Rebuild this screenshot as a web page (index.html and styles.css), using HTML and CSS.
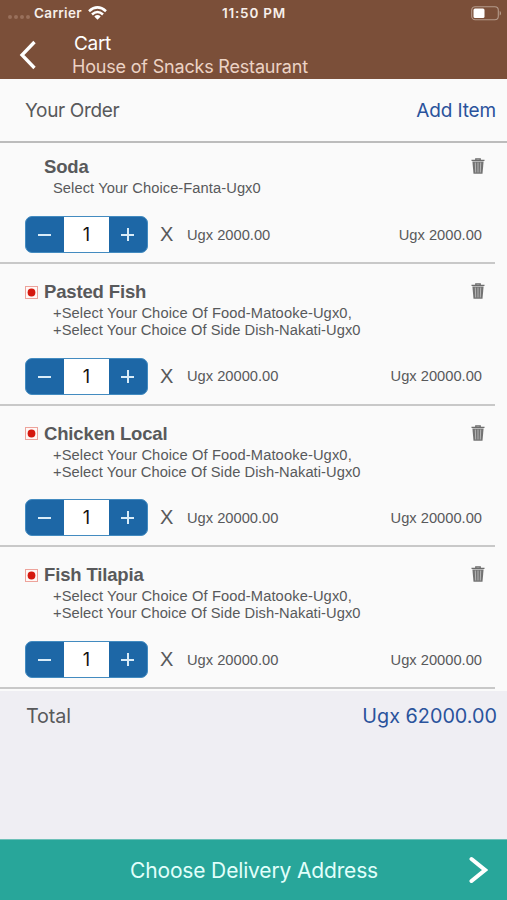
FILE: index.html
```
<!DOCTYPE html>
<html lang="en">
<head>
<meta charset="utf-8">
<title>Cart</title>
<link rel="stylesheet" href="styles.css">
</head>
<body>
<svg class="defs" width="0" height="0">
  <symbol id="trash" viewBox="0 0 14 17">
    <path d="M4.8 2V.8h4.400V2M.5 2.400h13" fill="none" stroke="#6c6c6c" stroke-width="1.3"/>
    <path d="M1.400 3.500h11.200l-1.100 12.300h-9z" fill="#737373"/>
    <path d="M4.300 4.500l.4 10M7 4.500v10M9.700 4.500l-.4 10" stroke="#bdbdbd" stroke-width=".9"/>
  </symbol>
  <symbol id="mark" viewBox="0 0 13 13">
    <rect x=".5" y=".5" width="12" height="12" fill="#fff8f6" stroke="#eda39b"/>
    <circle cx="6.5" cy="6.5" r="3.9" fill="#d5190f"/>
  </symbol>
</svg>
<header class="top">
  <div class="status">
    <div class="signal"><i></i><i></i><i></i><i></i></div>
    <span class="carrier">Carrier</span>
    <svg class="wifi" width="19" height="14" viewBox="0 0 19 14" fill="none" stroke="#fff" stroke-width="2.6"><path d="M1 5.2Q9.5-2.4 18 5.2M4 8.5Q9.500 3.5 15 8.500"/><path d="M6.300 10.500Q9.500 7.700 12.700 10.500L9.500 13.800z" fill="#fff" stroke="none"/></svg>
    <span class="time">11:50 PM</span>
    <svg class="battery" width="31" height="15" viewBox="0 0 31 15"><rect x=".7" y=".7" width="26.6" height="13" rx="3.500" fill="none" stroke="#b59a8b" stroke-width="1.1"/><rect x="2.500" y="2.500" width="11" height="9.400" rx="1.500" fill="#fff"/><path d="M28.700 5v4.500q1.300-.6 1.300-2.250T28.700 5" fill="#b59a8b"/></svg>
  </div>
  <div class="nav">
    <svg class="back" width="18" height="30" viewBox="0 0 18 30"><path d="M15.500 2L3 15 15.500 28" fill="none" stroke="#fff" stroke-width="3.300"/></svg>
    <div class="titles"><div class="title">Cart</div><div class="subtitle">House of Snacks Restaurant</div></div>
  </div>
</header>
<section class="order-head"><span class="your-order">Your Order</span><span class="add">Add Item</span></section>
<main class="list">
  <article class="item first">
    <div class="name-row"><span class="mark"></span><h2 class="soda">Soda</h2><svg class="trash"><use href="#trash"/></svg></div>
    <p class="options"><span class="o0">Select Your Choice-Fanta-Ugx0</span></p>
    <div class="buy"><div class="stepper"><b class="minus"></b><span>1</span><b class="plus"></b></div><span class="times">X</span><span class="price">Ugx 2000.00</span><span class="price sum">Ugx 2000.00</span></div>
  </article>
  <article class="item">
    <div class="name-row"><svg class="mark"><use href="#mark"/></svg><h2 class="pasted">Pasted Fish</h2><svg class="trash"><use href="#trash"/></svg></div>
    <p class="options"><span class="o1">+Select Your Choice Of Food-Matooke-Ugx0,</span><br><span class="o2">+Select Your Choice Of Side Dish-Nakati-Ugx0</span></p>
    <div class="buy"><div class="stepper"><b class="minus"></b><span>1</span><b class="plus"></b></div><span class="times">X</span><span class="price">Ugx 20000.00</span><span class="price sum">Ugx 20000.00</span></div>
  </article>
  <article class="item">
    <div class="name-row"><svg class="mark"><use href="#mark"/></svg><h2 class="chicken">Chicken Local</h2><svg class="trash"><use href="#trash"/></svg></div>
    <p class="options"><span class="o1">+Select Your Choice Of Food-Matooke-Ugx0,</span><br><span class="o2">+Select Your Choice Of Side Dish-Nakati-Ugx0</span></p>
    <div class="buy"><div class="stepper"><b class="minus"></b><span>1</span><b class="plus"></b></div><span class="times">X</span><span class="price">Ugx 20000.00</span><span class="price sum">Ugx 20000.00</span></div>
  </article>
  <article class="item">
    <div class="name-row"><svg class="mark"><use href="#mark"/></svg><h2 class="tilapia">Fish Tilapia</h2><svg class="trash"><use href="#trash"/></svg></div>
    <p class="options"><span class="o1">+Select Your Choice Of Food-Matooke-Ugx0,</span><br><span class="o2">+Select Your Choice Of Side Dish-Nakati-Ugx0</span></p>
    <div class="buy"><div class="stepper"><b class="minus"></b><span>1</span><b class="plus"></b></div><span class="times">X</span><span class="price">Ugx 20000.00</span><span class="price sum">Ugx 20000.00</span></div>
  </article>
</main>
<section class="total"><span class="total-label">Total</span><span class="amount">Ugx 62000.00</span></section>
<footer class="checkout"><span class="choose">Choose Delivery Address</span><svg width="19" height="28" viewBox="0 0 19 28"><path d="M2.500 3L16 14 2.500 25" fill="none" stroke="#fff" stroke-width="4" stroke-linecap="round"/></svg></footer>
</body>
</html>
```
FILE: styles.css
```
* { box-sizing: border-box; }
body {
  margin: 0;
  width: 507px;
  height: 900px;
  display: flex;
  flex-direction: column;
  overflow: hidden;
  background: #efeef3;
  color: #58595b;
  font-family: "Liberation Sans", Arial, sans-serif;
  white-space: nowrap;
}
.defs { display: none; }
.top {
  height: 79px;
  flex: none;
  background: #7b4f39;
  color: #fff;
  font-family: Inter, sans-serif;
}
.status {
  height: 26px;
  display: grid;
  grid-template-columns: 26px 53px 134px 1fr 31px;
  padding: 0 5px 0 8px;
  align-items: center;
  font-size: 13.5px;
  font-weight: 600;
}
.status > * { grid-row: 1; }
.signal { grid-column: 1; display: flex; gap: 2px; padding-top: 8px; }
.signal i { width: 4px; height: 4px; border-radius: 50%; background: #99705c; }
.carrier { grid-column: 2; color: #f7efea; letter-spacing: .35px; }
.wifi { grid-column: 3; margin-left: 1px; }
.time { grid-column: 4; color: #f7efea; padding-left: 1px; letter-spacing: .8px; }
.battery { grid-column: 5; }
.nav { display: flex; height: 53px; }
.back { margin: 14px 0 0 19px; }
.titles { margin: 7px 0 0 35px; }
.title { font-size: 19px; line-height: 22px; padding-left: 2px; letter-spacing: -.3px; }
.subtitle { font-size: 18px; line-height: 22px; margin-top: 1px; color: #ecd3c5; letter-spacing: -.19px; }
.order-head {
  height: 64px;
  flex: none;
  background: #fafafa;
  border-bottom: 2px solid #bcbcbc;
  display: flex;
  justify-content: space-between;
  align-items: center;
  padding: 0 11px 0 25px;
  font: 19px Inter, sans-serif;
  letter-spacing: -.35px;
}
.add, .amount { color: #2a539c; }
.add { letter-spacing: -.15px; }
.list { height: 548px; flex: none; background: #fafafa; }
.item {
  height: 141.7px;
  width: 495px;
  padding: 17px 13px 0 25px;
  border-bottom: 2px solid #c8c8c8;
  display: flex;
  flex-direction: column;
}
.item.first { height: 121px; padding-top: 13px; }
.name-row { display: flex; align-items: center; height: 22px; }
.mark { width: 13px; height: 13px; margin-right: 6px; }
h2 { margin: 0; font-size: 18.500px; line-height: 22px; letter-spacing: -.15px; }
.trash { width: 14px; height: 17px; margin: -1px -3px 0 auto; }
.options { margin: 2px 0 0 28px; font-size: 14.700px; line-height: 17px; }
.o0 { letter-spacing: .07px; }
.o1 { letter-spacing: .11px; }
.o2 { letter-spacing: .06px; }
.buy {
  display: flex;
  align-items: center;
  height: 37px;
  margin-top: auto;
  margin-bottom: 9px;
}
.stepper {
  width: 123px;
  height: 37px;
  border: 1px solid #438bc0;
  border-radius: 7px;
  background: #1d67a6;
  display: grid;
  grid-template-columns: 38px 45px 38px;
  overflow: hidden;
}
.stepper span { background: #fff; color: #111; font: 18px/36px Inter, sans-serif; text-align: center; }
.minus, .plus { background: linear-gradient(#d9ecf8, #d9ecf8) 12px 17px / 13px 2px no-repeat; }
.plus { background: linear-gradient(#d9ecf8, #d9ecf8) 12px 17px / 13px 2px no-repeat, linear-gradient(#d9ecf8, #d9ecf8) 18px 11px / 2px 13px no-repeat; }
.times { width: 39px; padding-left: 12px; font-size: 20px; }
.price { font-size: 14.700px; }
.sum { margin-left: auto; }
.total {
  display: flex;
  justify-content: space-between;
  height: 50px;
  align-items: center;
  padding: 0 10px 0 26px;
  font: 19.800px Inter, sans-serif;
}
.total-label { letter-spacing: -.15px; }
.checkout {
  height: 61px;
  flex: none;
  margin-top: auto;
  background: #28a69a;
  border-top: 1px solid #6dc0b8;
  color: #e2fffb;
  display: flex;
  align-items: center;
  justify-content: space-between;
  padding: 0 19px 0 130px;
  font: 21px Inter, sans-serif;
  letter-spacing: -.15px;
}
```
